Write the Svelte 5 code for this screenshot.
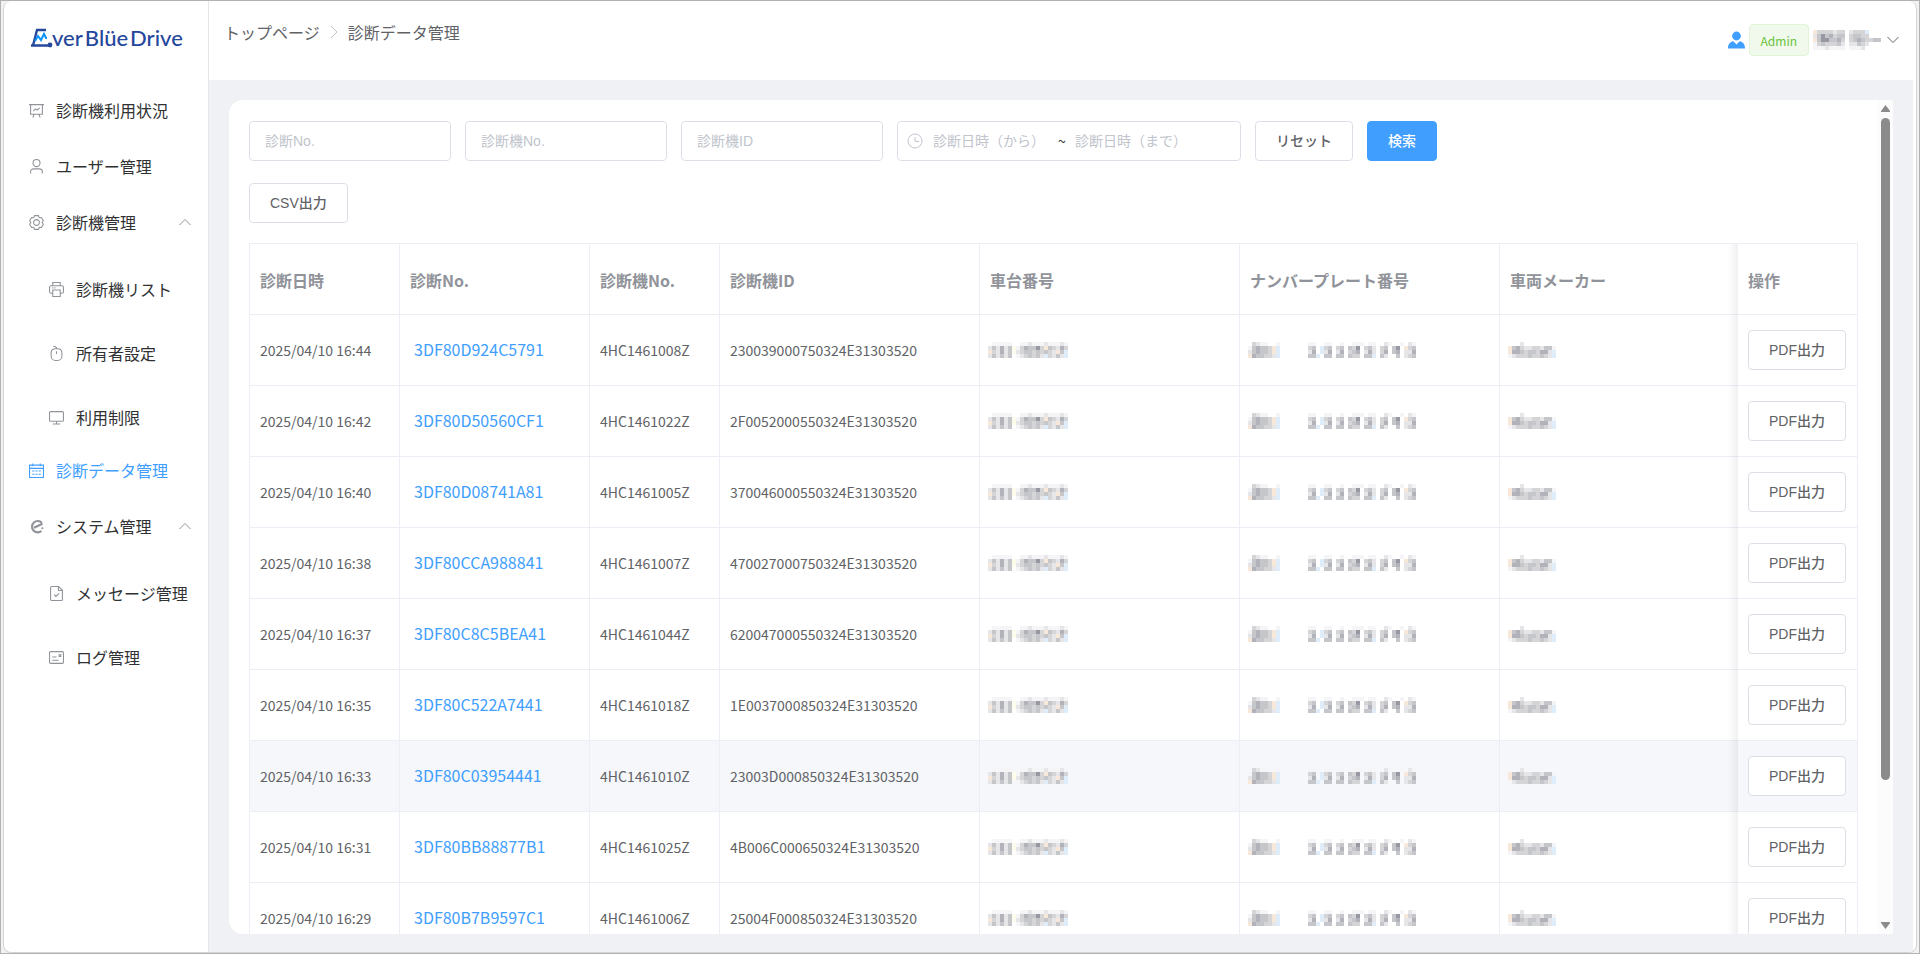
<script>

    const menu = [
        {label: "診断機利用状況", icon: "analysis"},
        {label: "ユーザー管理", icon: "user"},
        {
            label: "診断機管理", icon: "setting",
            children: [
                {label: "診断機リスト", icon: "printer"},
                {label: "所有者設定", icon: "mouse"},
                {label: "利用制限", icon: "monitor"}
            ]
        },
        {label: "診断データ管理", icon: "date", active: true},
        {
            label: "システム管理", icon: "eleme",
            children: [
                {label: "メッセージ管理", icon: "document"},
                {label: "ログ管理", icon: "postcard"}
            ]
        }
    ];

    // stroke paths on a 14 x 14 grid
    const icons = {
        analysis: "M0 1.5H14M1.5 1.5V10.5H12.5V1.5M4.8 10.5L3.6 13.5M9.2 10.5L10.4 13.5M4 7.5L6 5.5L7.5 6.5L10 4.5",
        user: "M7 .5A3.3 3.3 0 1 1 7 7.1A3.3 3.3 0 1 1 7 .5ZM1.5 13.5V12A2.8 2.8 0 0 1 4.3 9.2H9.7A2.8 2.8 0 0 1 12.5 12V13.5",
        setting: "M5.2 .6H8.8L9.6 2.5L11.6 2.3L13.4 5.4L12.2 7L13.4 8.6L11.6 11.7L9.6 11.5L8.8 13.4H5.2L4.4 11.5L2.4 11.7L.6 8.6L1.8 7L.6 5.4L2.4 2.3L4.4 2.5ZM7 4.3A2.7 2.7 0 1 1 7 9.7A2.7 2.7 0 1 1 7 4.3Z",
        printer: "M3.5 3.5V.5H10.5V3.5M3.5 10.5H2A1.5 1.5 0 0 1 .5 9V5A1.5 1.5 0 0 1 2 3.5H12A1.5 1.5 0 0 1 13.5 5V9A1.5 1.5 0 0 1 12 10.5H10.5M3.5 7.5H10.5V13.5H3.5ZM3 5.5H4M5 5.5H6",
        mouse: "M6 2.5H8A4 4 0 0 1 12 6V9.5A4 4 0 0 1 8 13.5H6A4 4 0 0 1 2 9.5V6A4 4 0 0 1 6 2.5ZM7 5V7.5M7 2.5V1.5L5.5 .5H4",
        monitor: "M1.5 1.5H12.5A1 1 0 0 1 13.5 2.5V9.5A1 1 0 0 1 12.5 10.5H1.5A1 1 0 0 1 .5 9.5V2.5A1 1 0 0 1 1.5 1.5ZM7 10.5V13M3.5 13H10.5",
        date: "M.5 2H13.5V13.5H.5ZM.5 5H13.5M3.5 .5V3M10.5 .5V3M3 7.5H5M6 7.5H8M9 7.5H11M3 10.5H5M6 10.5H8M9 10.5H11",
        document: "M9 .5H2.5A1 1 0 0 0 1.5 1.5V12.5A1 1 0 0 0 2.5 13.5H11.5A1 1 0 0 0 12.5 12.5V4ZM8.8 .8V4.2H12.4M4.8 8L6.5 9.7L9.4 6.8",
        postcard: "M1.5 1.5H12.5A1 1 0 0 1 13.5 2.5V11.5A1 1 0 0 1 12.5 12.5H1.5A1 1 0 0 1 .5 11.5V2.5A1 1 0 0 1 1.5 1.5ZM3 6.5H7M3 9.5H9M9.5 4.5H11V6H9.5Z"
    };

    const rows = [
        ["2025/04/10 16:44", "3DF80D924C5791", "4HC1461008Z", "230039000750324E31303520"],
        ["2025/04/10 16:42", "3DF80D50560CF1", "4HC1461022Z", "2F0052000550324E31303520"],
        ["2025/04/10 16:40", "3DF80D08741A81", "4HC1461005Z", "370046000550324E31303520"],
        ["2025/04/10 16:38", "3DF80CCA988841", "4HC1461007Z", "470027000750324E31303520"],
        ["2025/04/10 16:37", "3DF80C8C5BEA41", "4HC1461044Z", "620047000550324E31303520"],
        ["2025/04/10 16:35", "3DF80C522A7441", "4HC1461018Z", "1E0037000850324E31303520"],
        ["2025/04/10 16:33", "3DF80C03954441", "4HC1461010Z", "23003D000850324E31303520"],
        ["2025/04/10 16:31", "3DF80BB88877B1", "4HC1461025Z", "4B006C000650324E31303520"],
        ["2025/04/10 16:29", "3DF80B7B9597C1", "4HC1461006Z", "25004F000850324E31303520"]
    ];

    const current = 6;

    // personal data is shown as 4px blocks, one letter per block
    const tones = {
        a: "#f5f5f7", b: "#e6e6e9", c: "#d5d5d8", d: "#c5c6ca", e: "#b2b3ba",
        f: "#9798a1", o: "#f7e8da", s: "#dfecf9", y: "#fdfbec"
    };

    const masks = {
        chassis: [
            ".aaaaa..aabaaabaaaba",
            "bdbebdyaceddfcodcbec",
            "ocbebdybcddcdcdcbods",
            "bdbdbd.abcdcdbscbdbs"
        ],
        plate: [
            ".cbaa..a.......aa..aa..a..aaa.aa..ba..a.ba",
            "adeddcos.......cd.scd.cd.dcf.cdb.cd.df.ocd",
            "bdeddcos.......be.sbe.be.cde.beb.ce.de.bbe",
            "oeddccbs.......dds.dd.dd.dcc.dds.db..d.bcd"
        ],
        maker: [
            "...b........",
            "odecbbccbdda",
            "oeedcddceebs",
            "abcccdccdcbs"
        ],
        name: [
            "occccbcc.bcccs...",
            "bdfdecdd.cddcc...",
            "odffddec.cdedccdd",
            "acdcccdb.bbdcb...",
            "aaabaaaa.aaab...."
        ]
    };
</script>

{#snippet icon(name)}
    <svg class="icon" viewBox="0 0 14 14" aria-hidden="true">
        {#if name === "eleme"}
            <path class="thick" d="M12 3.6A5.3 5.3 0 1 0 11.6 11.2M4.6 8.2L12.6 4.4" />
            <circle class="dot" cx="12.5" cy="8.6" r="1" />
        {:else}
            <path d={icons[name]} />
        {/if}
    </svg>
{/snippet}

{#snippet mask(lines)}
    <svg class="mask" width={lines[0].length * 4} height={lines.length * 4} shape-rendering="crispEdges" aria-hidden="true">
        {#each lines as line, y}
            {#each line as tone, x}
                {#if tone !== "."}
                    <rect x={x * 4} y={y * 4} width="4" height="4" fill={tones[tone]} />
                {/if}
            {/each}
        {/each}
    </svg>
{/snippet}

<div class="window">
    <div class="app">
        <aside>
            <a class="logo" href="#top">
                <svg width="30" height="22" viewBox="0 0 30 22" aria-hidden="true">
                    <path d="M6 3H16M7 3L3 18.5M1 18.5H20" stroke="#25479c" stroke-width="2.4" fill="none" />
                    <path d="M5 14L8 9L11 13L14 7L16 11H17" stroke="#0a94f5" stroke-width="2" fill="none" />
                    <circle cx="20" cy="18" r="2.4" fill="#25479c" />
                </svg>
                <span class="ver">ver</span>
                <span>Blüe</span>
                <span>Drive</span>
            </a>

            <nav>
                {#each menu as item}
                    {#if item.children}
                        <button class="item">
                            {@render icon(item.icon)}
                            <span>{item.label}</span>
                            <svg class="arrow" viewBox="0 0 12 8" aria-hidden="true"><path d="M.5 7L6 1.5L11.5 7" /></svg>
                        </button>
                        {#each item.children as child}
                            <a class="item sub" href="#top">
                                {@render icon(child.icon)}
                                <span>{child.label}</span>
                            </a>
                        {/each}
                    {:else}
                        <a class="item" class:active={item.active} href="#top">
                            {@render icon(item.icon)}
                            <span>{item.label}</span>
                        </a>
                    {/if}
                {/each}
            </nav>
        </aside>

        <div class="content">
            <header>
                <div class="breadcrumb">
                    <a href="#top">トップページ</a>
                    <svg width="8" height="14" viewBox="0 0 8 14" aria-hidden="true"><path d="M1 1L7 7L1 13" /></svg>
                    <span>診断データ管理</span>
                </div>
                <button class="account">
                    <svg class="person" width="17" height="18" viewBox="0 0 17 18" aria-hidden="true">
                        <circle cx="8.5" cy="5" r="4.4" />
                        <path d="M0 17.5C0 13 2 11 5.4 10.2L8.5 13.4L11.6 10.2C15 11 17 13 17 17.5Z" />
                    </svg>
                    <span class="tag">Admin</span>
                    {@render mask(masks.name)}
                    <svg class="arrow" viewBox="0 0 12 8" aria-hidden="true"><path d="M.5 1L6 6.5L11.5 1" /></svg>
                </button>
            </header>

            <main>
                <div class="panel">
                    <div class="scroll">
                        <form class="filters">
                            <input type="text" placeholder="診断No." aria-label="診断No." />
                            <input type="text" placeholder="診断機No." aria-label="診断機No." />
                            <input type="text" placeholder="診断機ID" aria-label="診断機ID" />
                            <div class="range">
                                <svg width="16" height="16" viewBox="0 0 16 16" aria-hidden="true">
                                    <circle cx="8" cy="8" r="7" />
                                    <path d="M8 4V8.5H12" />
                                </svg>
                                <input type="text" placeholder="診断日時（から）" aria-label="診断日時（から）" />
                                <span>~</span>
                                <input type="text" placeholder="診断日時（まで）" aria-label="診断日時（まで）" />
                            </div>
                            <button class="btn" type="reset">リセット</button>
                            <button class="btn primary" type="button">検索</button>
                        </form>

                        <div class="actions">
                            <button class="btn">CSV出力</button>
                        </div>

                        <table>
                            <colgroup>
                                <col class="w150" />
                                <col class="w190" />
                                <col class="w130" />
                                <col class="w260" />
                                <col class="w260" />
                                <col class="w260" />
                                <col />
                                <col class="w120" />
                            </colgroup>
                            <thead>
                                <tr>
                                    <th>診断日時</th>
                                    <th>診断No.</th>
                                    <th>診断機No.</th>
                                    <th>診断機ID</th>
                                    <th>車台番号</th>
                                    <th>ナンバープレート番号</th>
                                    <th class="under">車両メーカー</th>
                                    <th class="fixed">操作</th>
                                </tr>
                            </thead>
                            <tbody>
                                {#each rows as [time, no, machine, id], i}
                                    <tr class:current={i === current}>
                                        <td>{time}</td>
                                        <td class="link"><a href="#top">{no}</a></td>
                                        <td>{machine}</td>
                                        <td>{id}</td>
                                        <td class="masked">{@render mask(masks.chassis)}</td>
                                        <td class="masked">{@render mask(masks.plate)}</td>
                                        <td class="masked under">{@render mask(masks.maker)}</td>
                                        <td class="fixed"><button class="btn">PDF出力</button></td>
                                    </tr>
                                {/each}
                            </tbody>
                        </table>
                    </div>

                    <div class="scrollbar" aria-hidden="true">
                        <svg width="9" height="7" viewBox="0 0 9 7"><path d="M4.5 0L9 6V7H0V6Z" /></svg>
                        <div class="track"><div class="thumb"></div></div>
                        <svg width="9" height="7" viewBox="0 0 9 7"><path d="M4.5 7L9 1V0H0V1Z" /></svg>
                    </div>
                </div>
            </main>
        </div>
    </div>
</div>

<style>

    :global(body) {
        margin: 0;
    }

    .window, .window * {
        box-sizing: border-box;
    }

    .window {
        height: 100vh;
        padding: 0 2px;
        border: 1px solid #b2b2b2;
        background: #f2f2f2;
        font-family: "Noto Sans CJK JP", sans-serif;
        font-size: 14px;
        line-height: 24px;
        color: #606266;
    }

    .app {
        display: flex;
        height: 100%;
        border: 1px solid #d4d4d4;
        border-top: 0;
        border-radius: 8px;
        background: #fff;
        overflow: hidden;
    }

    a {
        color: inherit;
        text-decoration: none;
    }

    button {
        margin: 0;
        border: 0;
        background: none;
        font: inherit;
        color: inherit;
        cursor: pointer;
    }

    svg {
        flex: none;
    }

    aside {
        flex: none;
        width: 205px;
        border-right: 1px solid #e6e6e6;
    }

    .logo {
        display: flex;
        align-items: center;
        gap: 2px;
        height: 81px;
        padding: 0 0 8px 26px;
        font-family: Lato, sans-serif;
        font-size: 22px;
        font-weight: 500;
        color: #25479c;
    }

    .logo .ver {
        margin-left: -10px;
    }

    .item {
        display: flex;
        align-items: center;
        gap: 12px;
        width: 100%;
        height: 56px;
        padding: 0 17px 0 25px;
        font-size: 16px;
        color: #303133;
        text-align: left;
    }

    .item.sub {
        height: 50px;
        margin-top: 14px;
        padding-left: 45px;
    }

    .item.active {
        color: #409eff;
    }

    .icon {
        width: 15px;
        height: 15px;
        fill: none;
        stroke: #909399;
    }

    .active .icon {
        stroke: #409eff;
    }

    .thick {
        stroke-width: 2;
    }

    .dot {
        fill: #909399;
        stroke: none;
    }

    .arrow {
        width: 12px;
        height: 8px;
        fill: none;
        stroke: #909399;
    }

    .item .arrow {
        margin-left: auto;
    }

    .content {
        display: flex;
        flex: 1;
        flex-direction: column;
        min-width: 0;
        padding-right: 3px;
    }

    header {
        display: flex;
        flex: none;
        justify-content: space-between;
        height: 79px;
        padding: 0 14px 0 15px;
    }

    .breadcrumb {
        display: flex;
        align-items: center;
        gap: 10px;
        height: 62px;
        font-size: 16px;
    }

    .breadcrumb svg {
        fill: none;
        stroke: #c0c4cc;
    }

    .account {
        display: flex;
        align-items: center;
        gap: 4px;
        height: 77px;
        padding: 0;
    }

    .account .arrow {
        margin-left: 2px;
        stroke: #606266;
    }

    .person {
        fill: #409eff;
    }

    .tag {
        height: 32px;
        padding: 0 11px;
        border: 1px solid #e1f3d8;
        border-radius: 4px;
        background: #f0f9eb;
        font-size: 12px;
        line-height: 32px;
        color: #67c23a;
    }

    main {
        flex: 1;
        min-height: 0;
        padding: 20px 20px 18px;
        background: #f0f1f5;
    }

    .panel {
        display: flex;
        height: 100%;
        border-radius: 14px 0 0 14px;
        background: #fff;
        overflow: hidden;
    }

    .scroll {
        flex: 1;
        min-width: 0;
        padding: 21px 20px 0;
        overflow-y: auto;
        scrollbar-width: none;
    }

    .filters {
        display: flex;
        align-items: center;
        gap: 14px;
    }

    input {
        height: 40px;
        padding: 0 15px;
        border: 1px solid #dcdfe6;
        border-radius: 4px;
        background: #fff;
        font-family: "Liberation Sans", "Noto Sans CJK JP", sans-serif;
        font-size: 14px;
        color: #606266;
    }

    input::placeholder {
        color: #c0c4cc;
    }

    .filters > input {
        width: 202px;
    }

    .range {
        display: flex;
        align-items: center;
        width: 344px;
        height: 40px;
        padding: 0 9px;
        border: 1px solid #dcdfe6;
        border-radius: 4px;
    }

    .range svg {
        margin-right: 10px;
        fill: none;
        stroke: #c0c4cc;
    }

    .range input {
        width: 116px;
        height: 36px;
        padding: 0;
        border: 0;
    }

    .range span {
        width: 26px;
        text-align: center;
        color: #303133;
    }

    .btn {
        height: 40px;
        padding: 0 20px;
        border: 1px solid #dcdfe6;
        border-radius: 4px;
        background: #fff;
        font-family: "Liberation Sans", "Noto Sans CJK JP", sans-serif;
        font-size: 14px;
        font-weight: 500;
        line-height: 20px;
        color: #606266;
    }

    .btn.primary {
        border-color: #409eff;
        background: #409eff;
        color: #fff;
    }

    .actions {
        display: flex;
        padding: 22px 0 20px;
    }

    table {
        width: 100%;
        table-layout: fixed;
        border-spacing: 0;
        border-top: 1px solid #ebeef5;
        border-left: 1px solid #ebeef5;
    }

    .w120 { width: 120px; }
    .w130 { width: 130px; }
    .w150 { width: 150px; }
    .w190 { width: 190px; }
    .w260 { width: 260px; }

    th, td {
        height: 71px;
        padding: 0 10px;
        border-right: 1px solid #ebeef5;
        border-bottom: 1px solid #ebeef5;
        text-align: left;
        white-space: nowrap;
    }

    th {
        padding-top: 2px;
        font-size: 16px;
        font-weight: 700;
        color: #909399;
    }

    td.link {
        padding: 0 10px 2px 14px;
        font-size: 16px;
        color: #409eff;
    }

    td.masked {
        padding-left: 8px;
    }

    .mask {
        display: block;
    }

    .under {
        border-right: 0;
    }

    .fixed {
        position: relative;
    }

    /* shadow the pinned column throws on the one beside it */
    .fixed::before {
        content: "";
        position: absolute;
        top: 0;
        bottom: -1px;
        left: -10px;
        width: 10px;
        background: linear-gradient(to right, transparent, rgba(0, 0, 0, 0.06));
    }

    .current td {
        background: #f5f7fa;
    }

    .scrollbar {
        display: flex;
        flex: none;
        flex-direction: column;
        align-items: center;
        gap: 6px;
        width: 15px;
        padding: 5px 0;
        background: #fcfcfc;
        fill: #8b8b8b;
    }

    .track {
        flex: 1;
        width: 9px;
    }

    .thumb {
        height: 83%;
        border-radius: 5px;
        background: #8b8b8b;
    }

</style>
